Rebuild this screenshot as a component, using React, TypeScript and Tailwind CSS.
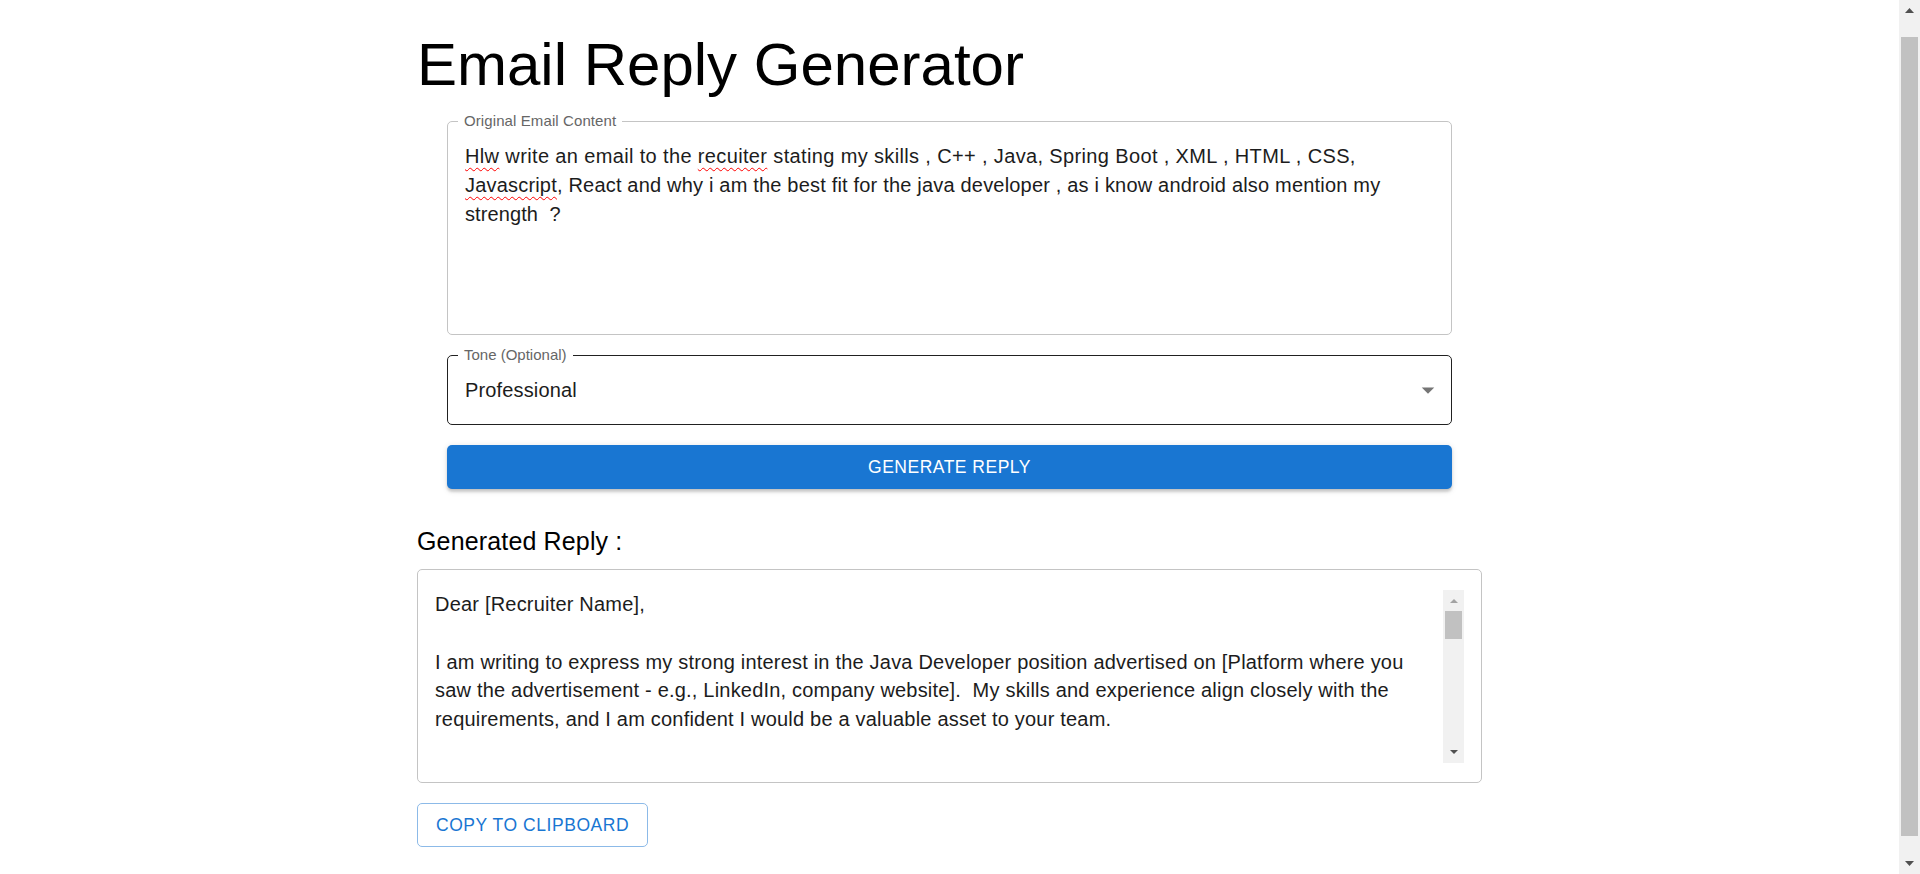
import React from "react";

function Tri({ dir, color, w = 9, h = 5 }: { dir: "up" | "down"; color: string; w?: number; h?: number }) {
  const pts = dir === "up" ? `0,${h} ${w / 2},0 ${w},${h}` : `0,0 ${w},0 ${w / 2},${h}`;
  return (
    <svg width={w} height={h} viewBox={`0 0 ${w} ${h}`}>
      <polygon points={pts} fill={color} />
    </svg>
  );
}

function Squiggle({ children }: { children: React.ReactNode }) {
  return (
    <span className="underline decoration-wavy decoration-[#ff0000] decoration-1 underline-offset-[4px]">
      {children}
    </span>
  );
}

export default function App() {
  return (
    <div className="flex h-[874px] w-[1920px] overflow-hidden bg-white font-['Liberation_Sans',Arial,Helvetica,sans-serif]">
      <main className="flex-1 overflow-hidden">
        <div className="mx-auto w-[1065px]">
          <h1 className="pt-[30px] text-[60px] leading-[70px] font-normal text-black">Email Reply Generator</h1>

          <div className="mt-[21px] flex flex-col gap-[20px] px-[30px]">
            {/* Original email */}
            <div className="relative h-[214px] rounded-[5px] border border-[#c4c4c4] px-[17px] pt-[20px]">
              <span className="absolute -top-[10px] left-[10px] bg-white px-[6px] text-[15px] leading-[18px] tracking-[0.1px] text-[#666666]">
                Original Email Content
              </span>
              <div className="text-[20px] leading-[28.75px] text-[#1c1c1c]">
                <div className="whitespace-pre tracking-[0.36px]">
                  <Squiggle>Hlw</Squiggle> write an email to the <Squiggle>recuiter</Squiggle> stating my skills , C++ , Java, Spring Boot , XML , HTML , CSS,
                </div>
                <div className="whitespace-pre tracking-[0.19px]">
                  <Squiggle>Javascript</Squiggle>, React and why i am the best fit for the java developer , as i know android also mention my
                </div>
                <div className="whitespace-pre tracking-[0.1px]">strength  ?</div>
              </div>
            </div>

            {/* Tone select */}
            <div className="relative flex h-[70px] items-center rounded-[5px] border border-[#212121] pl-[17px] pr-[8px]">
              <span className="absolute -top-[10px] left-[10px] bg-white px-[6px] text-[15px] leading-[18px] text-[#666666]">
                Tone (Optional)
              </span>
              <span className="flex-1 text-[20px] leading-[28.75px] tracking-[0.15px] text-[#1c1c1c]">Professional</span>
              <svg width="30" height="30" viewBox="0 0 24 24">
                <path d="M7 10l5 5 5-5z" fill="#757575" />
              </svg>
            </div>

            {/* Generate button */}
            <button className="flex h-[44px] items-center justify-center rounded-[5px] bg-[#1976d2] text-[17.5px] tracking-[0.5px] text-white shadow-[0_2.5px_1.25px_-2.5px_rgba(0,0,0,0.2),0_2.5px_2.5px_0_rgba(0,0,0,0.14),0_1.25px_6.25px_0_rgba(0,0,0,0.12)]">
              GENERATE REPLY
            </button>
          </div>

          <h6 className="mt-[32px] text-[25px] leading-[40px] font-normal tracking-[0.15px] text-black">Generated Reply :</h6>

          <div className="mt-[8px] h-[214px] rounded-[5px] border border-[#c4c4c4] pt-[20px] pr-[17px] pl-[17px]">
            <div className="flex h-[172.5px]">
              <div className="flex-1 overflow-hidden text-[20px] leading-[28.75px] tracking-[0.2px] text-[#1c1c1c]">
                <div className="whitespace-pre">Dear [Recruiter Name],</div>
                <div className="h-[28.75px]" />
                <div className="whitespace-pre">I am writing to express my strong interest in the Java Developer position advertised on [Platform where you</div>
                <div className="whitespace-pre">saw the advertisement - e.g., LinkedIn, company website].  My skills and experience align closely with the</div>
                <div className="whitespace-pre">requirements, and I am confident I would be a valuable asset to your team.</div>
              </div>
              <div className="flex w-[21px] flex-col bg-[#f1f1f1]">
                <div className="flex h-[21px] items-center justify-center">
                  <Tri dir="up" color="#a3a3a3" w={8} h={4} />
                </div>
                <div className="mx-[2px] h-[28px] bg-[#c1c1c1]" />
                <div className="flex-1" />
                <div className="flex h-[21px] items-center justify-center">
                  <Tri dir="down" color="#505050" w={8} h={4} />
                </div>
              </div>
            </div>
          </div>

          <button className="mt-[20px] flex h-[44px] items-center rounded-[5px] border border-[#8cbae8] px-[18px] text-[17.5px] tracking-[0.55px] text-[#1976d2]">
            COPY TO CLIPBOARD
          </button>
        </div>
      </main>

      {/* page scrollbar */}
      <div className="flex h-full w-[21px] flex-col bg-[#f1f1f1]">
        <div className="flex h-[21px] items-center justify-center">
          <Tri dir="up" color="#505050" />
        </div>
        <div className="flex flex-1 flex-col px-[2px] pt-[16px] pb-[17px]">
          <div className="flex-1 bg-[#c1c1c1]" />
        </div>
        <div className="flex h-[21px] items-center justify-center">
          <Tri dir="down" color="#505050" />
        </div>
      </div>
    </div>
  );
}
